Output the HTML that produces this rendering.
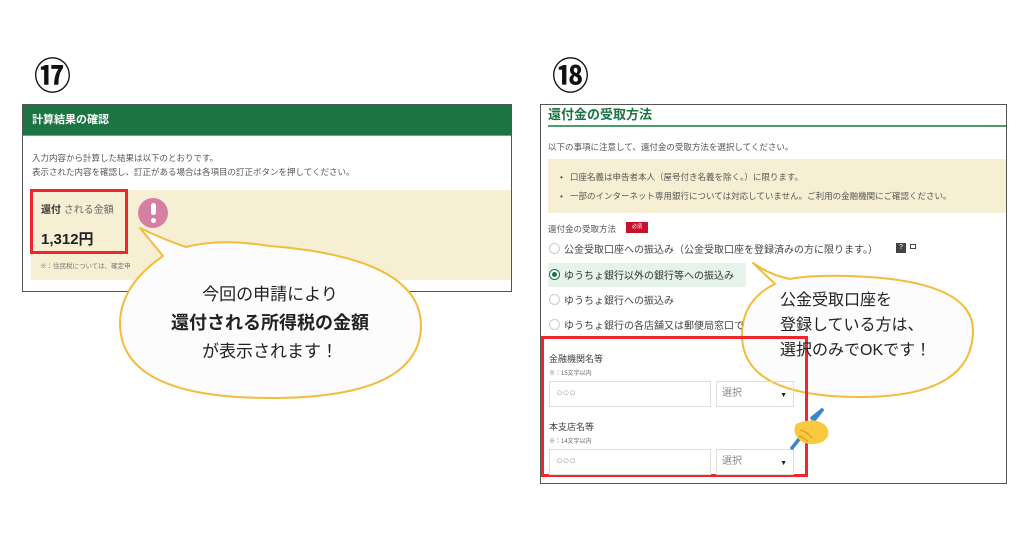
<!DOCTYPE html>
<html><head><meta charset="utf-8"><style>
*{margin:0;padding:0;box-sizing:border-box}
body{width:1024px;height:538px;background:#fff;position:relative;overflow:hidden;font-family:"Liberation Sans","Noto Sans CJK JP",sans-serif;color:#333}
.a{position:absolute;white-space:nowrap}
.s{font-size:8.5px;color:#555}
.radio{position:absolute;width:11px;height:11px;border:1px solid #ccc;border-radius:50%;background:#fff}
</style></head><body>
<div class="a" style="left:34px;top:56px;font-size:37px;font-weight:bold;color:#111;line-height:42px">⑰</div>
<div class="a" style="left:552px;top:56px;font-size:37px;font-weight:bold;color:#111;line-height:42px">⑱</div>

<!-- left panel -->
<div class="a" style="left:22px;top:104px;width:490px;height:188px;border:1px solid #555;background:#fff"></div>
<div class="a" style="left:23px;top:105px;width:488px;height:31px;background:#1c7443;border-bottom:1px solid #6aa682"></div>
<div class="a" style="left:32px;top:111px;font-size:11px;font-weight:bold;color:#fff;line-height:18px">計算結果の確認</div>
<div class="a s" style="left:32px;top:151px;line-height:14px">入力内容から計算した結果は以下のとおりです。<br>表示された内容を確認し、訂正がある場合は各項目の訂正ボタンを押してください。</div>
<div class="a" style="left:31px;top:190px;width:480px;height:90px;background:#f7efd3"></div>
<div class="a" style="left:30px;top:189px;width:98px;height:65px;border:3px solid #f0262b"></div>
<div class="a" style="left:41px;top:201px;font-size:10px;color:#333"><b>還付</b> <span style="color:#666">される金額</span></div>
<div class="a" style="left:41px;top:228px;font-size:15px;font-weight:bold;color:#222">1,312円</div>
<div class="a" style="left:40px;top:260px;font-size:6.5px;color:#777">※：住民税については、確定申</div>
<div class="a" style="left:138px;top:198px;width:30px;height:30px;border-radius:50%;background:#d67fa4"></div>
<div class="a" style="left:150.5px;top:203px;width:5px;height:12px;border-radius:3px;background:#fff"></div>
<div class="a" style="left:150.5px;top:218px;width:5px;height:5px;border-radius:50%;background:#fff"></div>

<svg class="a" style="left:0;top:0" width="1024" height="538">
<path d="M140 228 Q165 240 186 247 Q220 238 270 246 Q420 258 421 325 Q421 398 270 398 Q119 398 120 322 Q121 285 163 256 Z" fill="#fcfcfc" stroke="#f2bd3c" stroke-width="2" stroke-linejoin="round"/>
<path d="M753 263 Q770 275 790 279 Q810 275 850 276 Q972 280 973 330 Q973 397 860 397 Q742 397 742 335 Q742 300 775 284 Z" fill="#fcfcfc" stroke="#f2bd3c" stroke-width="2" stroke-linejoin="round"/>
</svg>
<div class="a" style="left:120px;top:281px;width:300px;text-align:center;font-size:17px;line-height:28px;color:#222">今回の申請により<br><b style="font-size:18px">還付される所得税の金額</b><br>が表示されます！</div>

<!-- right panel -->
<div class="a" style="left:540px;top:104px;width:467px;height:380px;border:1px solid #555"></div>
<div class="a" style="left:548px;top:106px;font-size:13px;font-weight:bold;color:#1c7443;line-height:18px">還付金の受取方法</div>
<div class="a" style="left:548px;top:125px;width:458px;height:2px;background:#4e9b6c"></div>
<div class="a s" style="left:548px;top:141px">以下の事項に注意して、還付金の受取方法を選択してください。</div>
<div class="a" style="left:548px;top:159px;width:458px;height:54px;background:#f7efd3"></div>
<div class="a s" style="left:560px;top:168px;line-height:19px">•&nbsp;&nbsp;&nbsp;口座名義は申告者本人（屋号付き名義を除く。）に限ります。<br>•&nbsp;&nbsp;&nbsp;一部のインターネット専用銀行については対応していません。ご利用の金融機関にご確認ください。</div>
<div class="a s" style="left:548px;top:223px">還付金の受取方法</div>
<div class="a" style="left:626px;top:222px;width:22px;height:11px;background:#c8102e;color:#fff;font-size:5px;text-align:center;line-height:11px">必須</div>
<div class="radio" style="left:549px;top:243px"></div>
<div class="a" style="left:564px;top:241px;font-size:10px;color:#444">公金受取口座への振込み（公金受取口座を登録済みの方に限ります。）</div>
<div class="a" style="left:896px;top:243px;width:10px;height:10px;background:#444;color:#fff;font-size:7px;text-align:center;line-height:10px">?</div>
<div class="a" style="left:910px;top:244px;width:6px;height:5px;border:1.5px solid #444"></div>
<div class="a" style="left:548px;top:263px;width:198px;height:24px;background:#e5f3ea"></div>
<div class="radio" style="left:549px;top:269px;border:1.5px solid #1c7443"></div>
<div class="a" style="left:552px;top:272px;width:5px;height:5px;border-radius:50%;background:#1c7443"></div>
<div class="a" style="left:564px;top:267px;font-size:10px;color:#333">ゆうちょ銀行以外の銀行等への振込み</div>
<div class="radio" style="left:549px;top:294px"></div>
<div class="a" style="left:564px;top:292px;font-size:10px;color:#444">ゆうちょ銀行への振込み</div>
<div class="radio" style="left:549px;top:319px"></div>
<div class="a" style="left:564px;top:317px;font-size:10px;color:#444">ゆうちょ銀行の各店舗又は郵便局窓口で</div>

<div class="a" style="left:541px;top:336px;width:267px;height:141px;border:3px solid #f0262b"></div>
<div class="a" style="left:549px;top:352px;font-size:9px;color:#444">金融機関名等</div>
<div class="a" style="left:549px;top:368px;font-size:6px;color:#666">※：15文字以内</div>
<div class="a" style="left:549px;top:381px;width:162px;height:26px;border:1px solid #ddd;font-size:11px;color:#999;padding:5px 6px">○○○</div>
<div class="a" style="left:716px;top:381px;width:78px;height:26px;border:1px solid #ddd;font-size:10px;color:#888;padding:5px 5px;line-height:14px">選択<span style="position:absolute;right:6px;top:7px;font-size:7px;color:#222">▼</span></div>
<div class="a" style="left:549px;top:420px;font-size:9px;color:#444">本支店名等</div>
<div class="a" style="left:549px;top:436px;font-size:6px;color:#666">※：14文字以内</div>
<div class="a" style="left:549px;top:449px;width:162px;height:26px;border:1px solid #ddd;font-size:11px;color:#999;padding:5px 6px">○○○</div>
<div class="a" style="left:716px;top:449px;width:78px;height:26px;border:1px solid #ddd;font-size:10px;color:#888;padding:5px 5px;line-height:14px">選択<span style="position:absolute;right:6px;top:7px;font-size:7px;color:#222">▼</span></div>

<div class="a" style="left:780px;top:288px;font-size:16px;line-height:25px;color:#222">公金受取口座を<br>登録している方は、<br>選択のみでOKです！</div>

<svg class="a" style="left:780px;top:400px" width="60" height="55">
<path d="M12 48 L42 10" stroke="#3a86c8" stroke-width="3.5" stroke-linecap="round"/>
<path d="M16 24 Q30 18 40 22 Q50 26 48 36 Q44 44 32 44 Q22 44 18 38 Q12 32 16 24 Z" fill="#f9c93e"/>
<path d="M20 30 Q28 32 32 38 M19 36 Q25 38 28 42" stroke="#e09a2a" fill="none" stroke-width="1.2"/>
<path d="M32 18 L42 10" stroke="#3a86c8" stroke-width="3.5" stroke-linecap="round"/>
</svg>
</body></html>
